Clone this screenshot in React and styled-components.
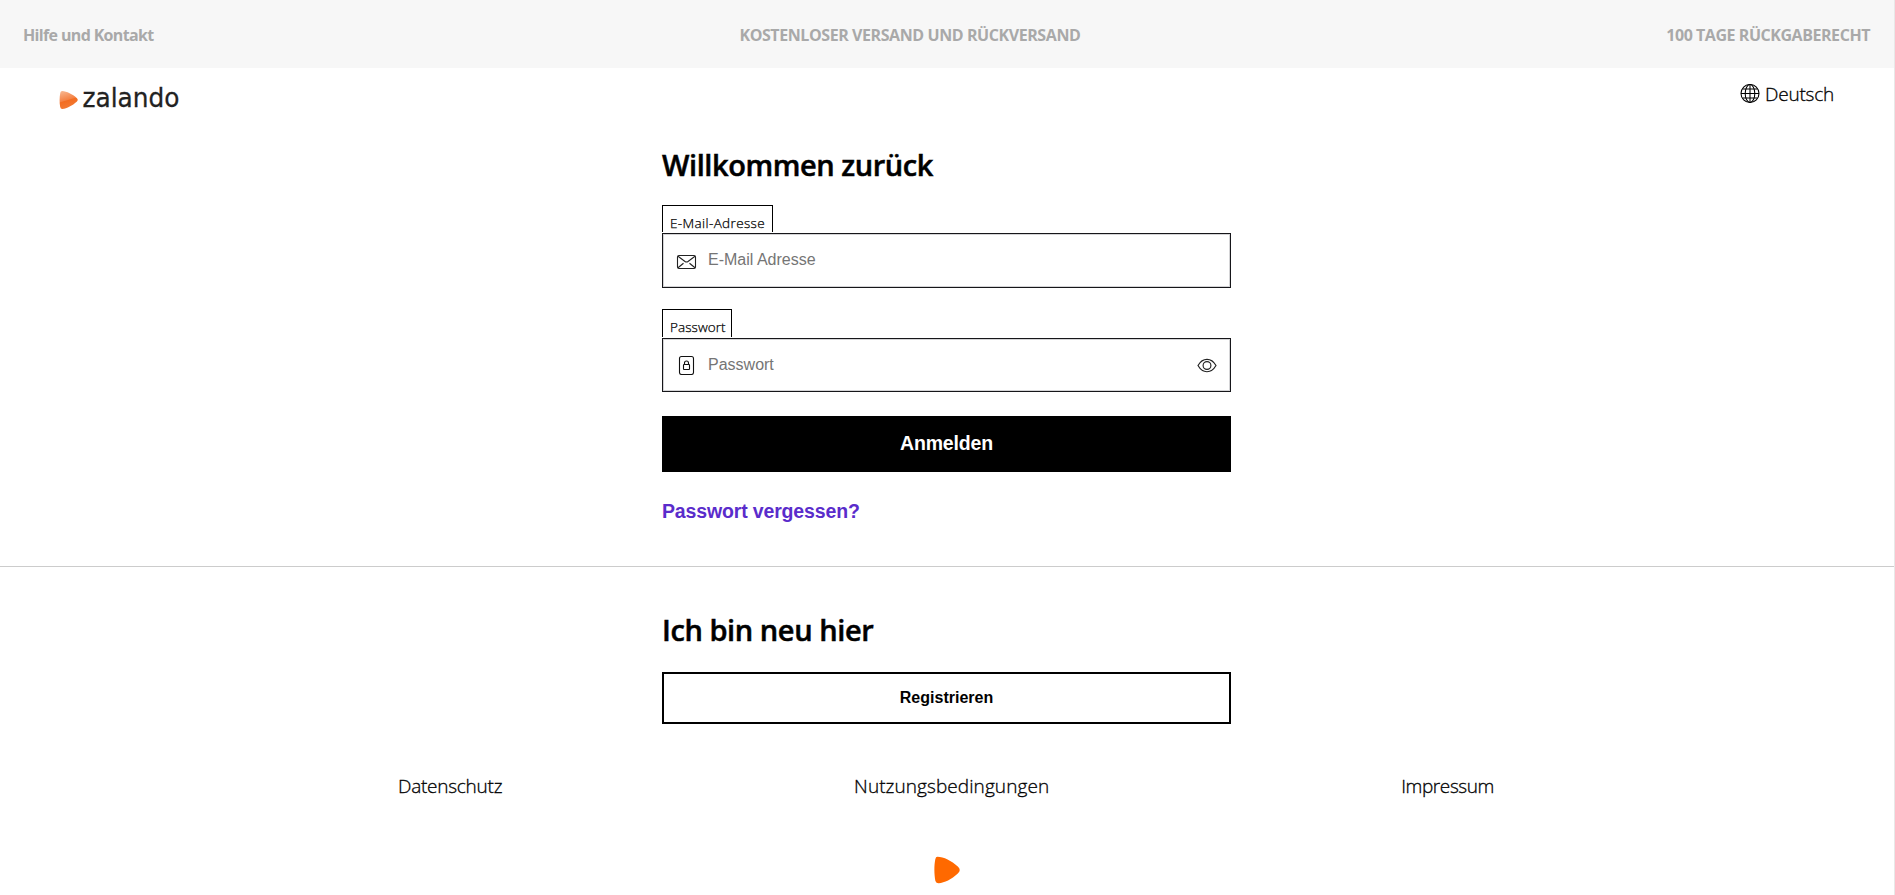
import React from "react";
import styled, { createGlobalStyle } from "styled-components";

const GlobalStyle = createGlobalStyle`
  *, *::before, *::after { box-sizing: border-box; }
  body { margin: 0; background: #fff; color: #000; font-family: "Open Sans", "Noto Sans", sans-serif; }
`;

const Page = styled.div`
  width: 100%;
  height: 895px;
  overflow: hidden;
  border-right: 1px solid #e8e8e8;
`;

const TopBar = styled.div`
  display: flex;
  justify-content: space-between;
  height: 68px;
  padding: 24px 24px 0 23px;
  background: #f7f7f7;
`;

const TopLink = styled.span`
  font-size: 16px;
  line-height: 22px;
  font-weight: 700;
  color: #a9a9a9;
  white-space: nowrap;
  letter-spacing: ${(p) => p.$spacing}px;
`;

const Header = styled.header`
  display: flex;
  justify-content: space-between;
  height: 77px;
  padding: 14px 60px 0 58px;
`;

const Language = styled.div`
  display: flex;
  gap: 5px;
  font-size: 19px;
  line-height: 24px;
  font-weight: 300;
  -webkit-text-stroke: 0.3px #000;
  letter-spacing: ${(p) => p.$spacing}px;
  svg { margin-top: 2px; }
`;

const Column = styled.section`
  display: flex;
  flex-direction: column;
  align-items: flex-start;
  width: 569px;
  margin-left: 662px;
`;

const Title = styled.h1`
  margin: 0;
  height: 40px;
  line-height: 40px;
  font-size: 29px;
  font-weight: 600;
  -webkit-text-stroke: 0.5px #000;
  white-space: nowrap;
  letter-spacing: ${(p) => p.$spacing}px;
`;

const Label = styled.label`
  height: ${(p) => p.$height}px;
  width: ${(p) => p.$width}px;
  margin-top: ${(p) => p.$top}px;
  padding: 8px 0 0 7px;
  border: 1px solid #000;
  border-bottom: 0;
  font-size: 13.5px;
  line-height: 18px;
  font-weight: 300;
  -webkit-text-stroke: 0.25px #000;
  white-space: nowrap;
  letter-spacing: ${(p) => p.$spacing}px;
`;

const Field = styled.div`
  display: flex;
  align-items: center;
  width: 100%;
  height: ${(p) => p.$height}px;
  margin-top: 1px;
  padding: 0 13px;
  border: 1px solid #16161a;
  box-shadow: inset 0 0 0 1px #d4d4d6;
`;

const Input = styled.input`
  flex: 1;
  height: 40px;
  margin: 0 0 ${(p) => p.$lift}px 11px;
  padding: 0;
  border: 0;
  outline: 0;
  background: transparent;
  font: 16px "Liberation Sans", Arial, sans-serif;
  &::placeholder { color: #757575; opacity: 1; }
`;

const Submit = styled.button`
  width: 100%;
  height: 56px;
  margin-top: 24px;
  padding: 0 0 2px;
  border: 0;
  background: #000;
  color: #fff;
  font: 700 19.5px "Liberation Sans", Arial, sans-serif;
  letter-spacing: -0.15px;
`;

const Forgot = styled.a`
  height: 24px;
  margin-top: 27px;
  color: #5a2ccb;
  font: 700 19.5px/24px "Liberation Sans", Arial, sans-serif;
  letter-spacing: ${(p) => p.$spacing}px;
`;

const Divider = styled.hr`
  height: 1px;
  margin: 43px 0 43px;
  border: 0;
  background: #ccc;
`;

const Register = styled.button`
  width: 100%;
  height: 52px;
  margin-top: 22px;
  padding: 0;
  border: 2px solid #000;
  background: #fff;
  color: #000;
  font: 700 16px "Liberation Sans", Arial, sans-serif;
`;

const Footer = styled.footer`
  display: flex;
  justify-content: space-between;
  margin: 49px 400px 0 398px;
`;

const FooterLink = styled.a`
  font-size: 19px;
  line-height: 27px;
  font-weight: 300;
  -webkit-text-stroke: 0.3px #000;
  white-space: nowrap;
  letter-spacing: ${(p) => p.$spacing}px;
`;

const FooterMark = styled.div`
  display: flex;
  justify-content: center;
  padding-top: 56px;
`;

const Logo = () => (
  <svg width="130" height="40" viewBox="0 0 130 40" overflow="visible" aria-label="zalando">
    <defs>
      <linearGradient id="mark" x1="0.2" y1="0" x2="0.5" y2="1">
        <stop offset="0" stopColor="#f8b48c" />
        <stop offset="0.5" stopColor="#f48245" />
        <stop offset="0.55" stopColor="#f36d21" />
        <stop offset="1" stopColor="#f27c37" />
      </linearGradient>
    </defs>
    <path d="M4.2 9.1C8.8 9.4 14.5 12.2 18.7 16.1Q20.8 18 18.7 19.7C14.5 23.4 9 26.5 4.4 27Q2.6 27.1 2.2 25C1.4 20.5 1.4 15.5 2.3 10.8Q2.6 9.1 4.2 9.1Z" fill="url(#mark)" />
    <text x="24.500" y="25.200" fontFamily="DejaVu Sans" fontSize="26" fill="#222" stroke="#222" strokeWidth="0.3" textLength="97" lengthAdjust="spacingAndGlyphs">zalando</text>
  </svg>
);

const Globe = () => (
  <svg width="20" height="20" viewBox="0 0 20 20" fill="none" stroke="#000" strokeWidth="1.05">
    <circle cx="10" cy="9.5" r="9" />
    <ellipse cx="10" cy="9.5" rx="4.8" ry="9" />
    <path d="M10 .5v18M1 9.5h18M2.5 5h15M2.5 14h15" />
  </svg>
);

const Mail = () => (
  <svg width="21" height="20" viewBox="0 0 21 20" fill="none" stroke="#222" strokeWidth="1.1">
    <rect x="1.5" y="4.5" width="18" height="13" rx="1.5" />
    <path d="M2 5.3l7 5.2q1.5 1 3 0l7-5.2M2 16.8l5.5-4.5M19 16.8l-5.5-4.5" />
  </svg>
);

const Lock = () => (
  <svg width="21" height="20" viewBox="0 0 21 20" fill="none" stroke="#111" strokeWidth="1.1">
    <rect x="3.5" y="1.5" width="14" height="18" rx="2" />
    <rect x="7.5" y="9.5" width="6" height="5" rx=".6" />
    <path d="M8.5 9.5V8a2 2 0 0 1 4 0v1.500" />
  </svg>
);

const Eye = () => (
  <svg width="20" height="20" viewBox="0 0 20 20" fill="none" stroke="#222" strokeWidth="1.15">
    <path d="M1 10.500C3.400 6.300 6.500 4.300 10 4.300s6.600 2 9 6.200c-2.400 4.200-5.500 6.200-9 6.200S3.400 14.700 1 10.500Z" />
    <circle cx="10" cy="10.500" r="3.900" />
  </svg>
);

const OrangeMark = () => (
  <svg width="27" height="28" viewBox="0 0 27 28">
    <path d="M3.400.8C9.700.8 17.500 4.800 23.800 10.600Q27.700 14 23.800 17.400C17.500 23.200 10.500 26.700 4.700 27.200Q2.200 27.300 1.400 25C.1 18.500 0 9.800 1.300 3.200Q1.800.8 3.400.8Z" fill="#ff6900" />
  </svg>
);

export default function App() {
  return (
    <>
      <GlobalStyle />
      <Page>
        <TopBar>
          <TopLink $spacing={-0.65}>Hilfe und Kontakt</TopLink>
          <TopLink $spacing={-0.42}>KOSTENLOSER VERSAND UND RÜCKVERSAND</TopLink>
          <TopLink $spacing={-0.45}>100 TAGE RÜCKGABERECHT</TopLink>
        </TopBar>
        <Header>
          <Logo />
          <Language $spacing={-0.22}><Globe />Deutsch</Language>
        </Header>
        <Column>
          <Title $spacing={-0.43}>Willkommen zurück</Title>
          <Label htmlFor="email" $height={27} $width={111} $top={20} $spacing={0.37}>E-Mail-Adresse</Label>
          <Field $height={55}>
            <Mail />
            <Input id="email" $lift={2} placeholder="E-Mail Adresse" />
          </Field>
          <Label htmlFor="password" $height={28} $width={70} $top={21} $spacing={0.08}>Passwort</Label>
          <Field $height={54}>
            <Lock />
            <Input id="password" type="password" $lift={0} placeholder="Passwort" />
            <Eye />
          </Field>
          <Submit>Anmelden</Submit>
          <Forgot $spacing={-0.15}>Passwort vergessen?</Forgot>
        </Column>
        <Divider />
        <Column>
          <Title as="h2" $spacing={-0.43}>Ich bin neu hier</Title>
          <Register>Registrieren</Register>
        </Column>
        <Footer>
          <FooterLink $spacing={-0.25}>Datenschutz</FooterLink>
          <FooterLink $spacing={0.08}>Nutzungsbedingungen</FooterLink>
          <FooterLink $spacing={-0.4}>Impressum</FooterLink>
        </Footer>
        <FooterMark><OrangeMark /></FooterMark>
      </Page>
    </>
  );
}
